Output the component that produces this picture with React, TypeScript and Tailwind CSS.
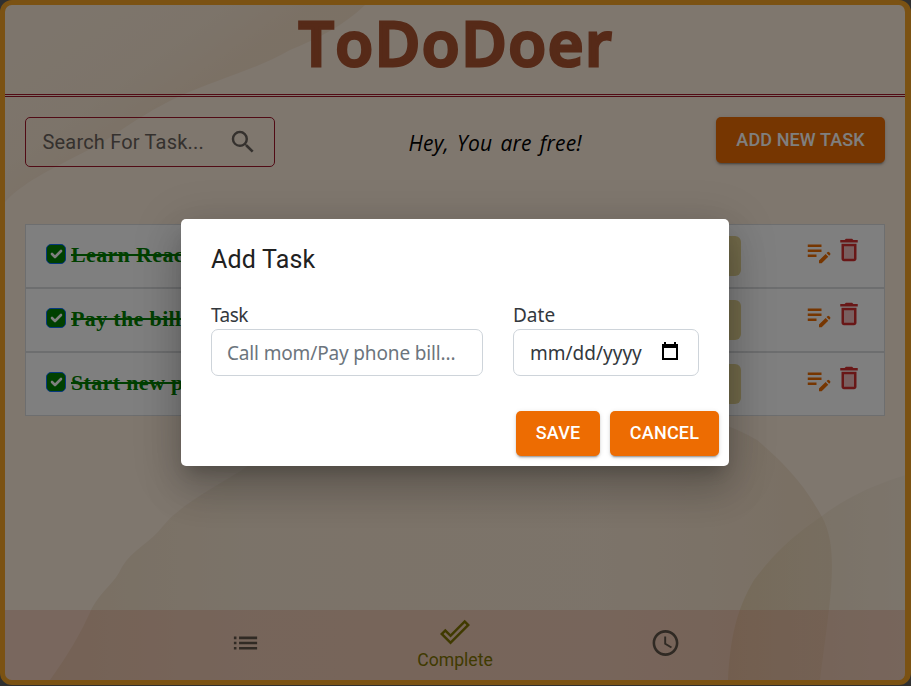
import React from "react";
import {
  MdSearch,
  MdEditNote,
  MdDeleteOutline,
  MdList,
  MdDoneOutline,
  MdAccessTime,
} from "react-icons/md";

const tasks = ["Learn React", "Pay the bills", "Start new project"];

function Backdrop() {
  return (
    <svg className="absolute inset-0 h-full w-full" viewBox="5 5 900 675" preserveAspectRatio="none" aria-hidden="true">
      <defs>
        <linearGradient id="tl" gradientUnits="userSpaceOnUse" x1="90" y1="0" x2="170" y2="110">
          <stop offset="0" stopColor="#e8d8bc" stopOpacity="0.15" />
          <stop offset="0.6" stopColor="#e8d2b2" stopOpacity="0.2" />
          <stop offset="1" stopColor="#e6c49c" stopOpacity="0.28" />
        </linearGradient>
        <linearGradient id="mid" x1="0" y1="0" x2="1" y2="0">
          <stop offset="0" stopColor="#e0c49c" stopOpacity="0.38" />
          <stop offset="0.25" stopColor="#e6d4b6" stopOpacity="0.28" />
          <stop offset="0.7" stopColor="#ecd6ba" stopOpacity="0.26" />
          <stop offset="1" stopColor="#e2c6a0" stopOpacity="0.38" />
        </linearGradient>
        <linearGradient id="br" x1="0" y1="0" x2="1" y2="0">
          <stop offset="0" stopColor="#dcc08c" stopOpacity="0.42" />
          <stop offset="0.5" stopColor="#e2d0ac" stopOpacity="0.3" />
          <stop offset="1" stopColor="#e8dcc2" stopOpacity="0.22" />
        </linearGradient>
      </defs>
      <path d="M5 5H365C345 25 315 40 290 50C255 70 215 80 180 96C140 115 120 132 98 145C60 165 25 180 5 202Z" fill="url(#tl)" />
      <path d="M50 680C68 655 80 635 92 608C102 590 115 583 122 567C132 550 150 543 163 526C180 505 215 487 245 468C340 400 640 370 757 440C795 472 810 495 822 517C840 550 830 600 820 680Z" fill="url(#mid)" />
      <path d="M728 680C730 640 736 610 754 580C775 553 790 538 822 516C850 495 875 485 906 475V680Z" fill="url(#br)" />
    </svg>
  );
}

function TaskRow({ name }: { name: string }) {
  return (
    <li className="flex h-16 items-start border border-[#dadcdf] bg-white pl-5 pr-5">
      <span className="mt-[19px] flex h-5 w-5 items-center justify-center rounded-[5px] border border-[#0d6efd] bg-[#008000]">
        <svg viewBox="0 0 20 20" className="h-5 w-5 shrink-0" fill="none" stroke="white" strokeWidth="2.6" strokeLinecap="round" strokeLinejoin="round">
          <path d="m6 10 3 3 6-6" />
        </svg>
      </span>
      <span className="ml-[5px] mt-[17px] w-[260px] whitespace-nowrap font-['Liberation_Serif',serif] text-[22px] font-bold leading-[26px] tracking-[0.35px] text-[#008000] line-through decoration-2">
        {name}
      </span>
      <span className="ml-auto mt-[11px] h-10 w-[140px] rounded-md bg-[#e4d494]" />
      <span className="ml-[63px] mt-[12px] flex shrink-0 items-start">
        <MdEditNote className="h-[30px] w-[30px] text-[#ed6c02]" />
        <span className="relative -mt-0.5 h-[30px] w-[30px]">
          <span className="absolute left-[9px] top-[11px] h-[14px] w-3 bg-[#d32f2f]/30" />
          <MdDeleteOutline className="relative h-[30px] w-[30px] text-[#d32f2f]" />
        </span>
      </span>
    </li>
  );
}

const buttonStyle =
  "rounded-[5px] bg-[#ed6c02] pb-[2px] text-[18px] font-medium text-white shadow-[0_3px_1px_-2px_rgba(0,0,0,0.2),0_2px_2px_0_rgba(0,0,0,0.14),0_1px_5px_0_rgba(0,0,0,0.12)]";

export default function App() {
  return (
    <div className="relative h-[686px] w-[911px] overflow-hidden bg-[#606060] font-[Roboto,sans-serif]">
      <div className="relative flex h-[685px] w-full flex-col overflow-hidden rounded-[12px] border-[5px] border-r-[6px] border-[#f6a426] bg-[#feeedd]">
        <Backdrop />
        <header className="relative flex h-[92px] shrink-0 justify-center border-b-[3px] border-double border-[#a3172b]">
          <h1 className="-mt-2 whitespace-nowrap pl-[2px] font-['Open_Sans',sans-serif] text-[62px] font-semibold leading-[90px] tracking-[1.6px] text-[#ac5430] [-webkit-text-stroke:3px_#ac5430] [stroke-linejoin:round]">
            ToDoDoer
          </h1>
        </header>
        <div className="relative mt-5 flex h-[50px] shrink-0 items-start justify-between px-5">
          <div className="flex h-[50px] w-[250px] items-center rounded-[5px] border border-[#a3172b] pl-[16.5px] pr-4">
            <span className="flex-1 whitespace-nowrap text-[20px] tracking-[0.19px] text-[#6a635c]">Search For Task...</span>
            <MdSearch className="h-[30px] w-[30px] text-[#6a635c]" />
          </div>
          <p className="mt-[12px] w-[174px] whitespace-nowrap font-['Open_Sans',sans-serif] text-[21px] italic leading-7 tracking-[0.2px] text-black [word-spacing:2.5px]">
            Hey, You are free!
          </p>
          <button className={`h-[46px] w-[169px] tracking-[0.1px] ${buttonStyle}`}>ADD NEW TASK</button>
        </div>
        <ul className="relative mx-5 mt-[57px]">
          {tasks.map((t) => (
            <TaskRow key={t} name={t} />
          ))}
        </ul>
        <nav className="relative mt-auto flex h-[70px] shrink-0 items-center justify-center bg-[#d88870]/30 text-[#605448]">
          <div className="flex w-[210px] justify-center">
            <MdList className="h-[31px] w-[31px] -translate-y-[2.5px]" />
          </div>
          <div className="flex w-[210px] flex-col items-center text-[#807400]">
            <MdDoneOutline className="-mt-px mb-px h-[30px] w-[30px]" />
            <span className="text-[17.6px] leading-6">Complete</span>
          </div>
          <div className="flex w-[210px] justify-center">
            <MdAccessTime className="h-[31px] w-[31px] -translate-y-[2.5px]" />
          </div>
        </nav>
      </div>

      <div className="absolute inset-0 flex items-start justify-center bg-black/50 pt-[219px]">
        <div className="mr-px flex h-[247px] w-[548px] flex-col rounded-[5px] bg-white shadow-[0_11px_15px_-7px_rgba(0,0,0,0.2),0_24px_38px_3px_rgba(0,0,0,0.14),0_9px_46px_8px_rgba(0,0,0,0.12)]">
          <h2 className="mt-[21px] px-[30px] text-[25px] leading-10 tracking-[0.19px] text-[#212121]">Add Task</h2>
          <div className="mt-5 flex gap-[30px] px-[30px] font-['Noto_Sans',sans-serif] text-[19px] text-[#33383d]">
            <label className="block w-[272px]">
              <span className="block h-[29px] leading-[30px] tracking-[-0.5px]">Task</span>
              <span className="flex h-[47px] items-center rounded-[7px] border border-[#ced4da] px-[15px] pt-px tracking-[-0.15px] text-[#6c757d]">Call mom/Pay phone bill...</span>
            </label>
            <label className="block w-[186px]">
              <span className="block h-[29px] leading-[30px]">Date</span>
              <span className="flex h-[47px] items-center justify-between rounded-[7px] border border-[#ced4da] pl-4 pr-[19px] pt-px">
                mm/dd/yyyy
                <svg viewBox="0 0 18 20" className="mb-1 h-5 w-[18px]" fill="none" stroke="black">
                  <path d="M2 4h14v14H2z" strokeWidth="2" />
                  <path d="M1 5h16" strokeWidth="4" />
                  <path d="M4 1v3M14 1v3" strokeWidth="2" />
                </svg>
              </span>
            </label>
          </div>
          <div className="mt-[35px] flex justify-end gap-[10px] px-[10px]">
            <button className={`h-[45px] w-[84px] tracking-[0.2px] ${buttonStyle}`}>SAVE</button>
            <button className={`h-[45px] w-[109px] tracking-[0.2px] ${buttonStyle}`}>CANCEL</button>
          </div>
        </div>
      </div>
    </div>
  );
}
